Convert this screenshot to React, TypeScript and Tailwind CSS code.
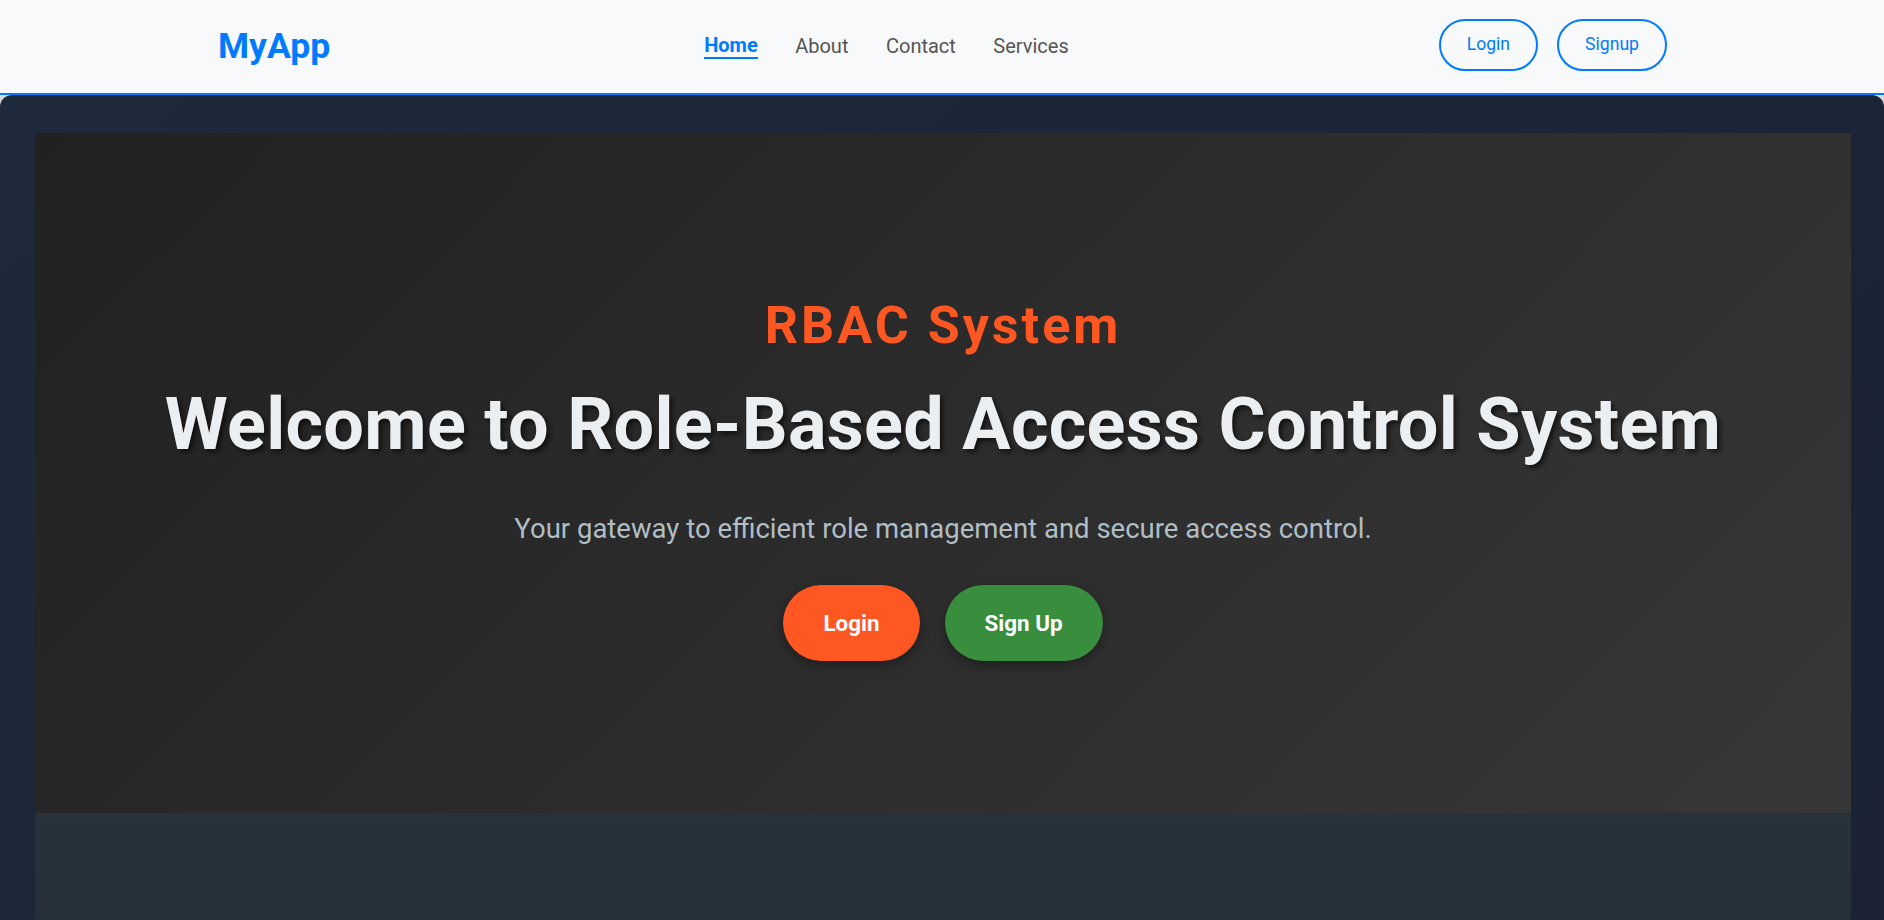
import React from "react";

export default function App() {
  return (
    <div className="min-h-screen bg-[#d9d9d9] font-['Roboto',_'Liberation_Sans',_sans-serif]">
      <nav className="h-[95px] bg-[#f8f9fa] border-b-2 border-[#007bff] flex items-center justify-between pl-[218px] pr-[217px]">
        <div className="text-[35.5px] leading-none font-bold text-[#007bff]">MyApp</div>
        <ul className="flex items-center gap-[37.5px] text-[20px] leading-[23px] ml-[4px]">
          <li className="font-bold text-[#007bff] border-b-2 border-[#007bff]">Home</li>
          <li className="text-[#555555]">About</li>
          <li className="text-[#555555]">Contact</li>
          <li className="text-[#555555]">Services</li>
        </ul>
        <div className="flex items-center gap-[19px] -mt-[3px]">
          <button className="h-[52px] px-[26px] rounded-full border-2 border-[#007bff] text-[#007bff] text-[17.6px] leading-none bg-transparent">
            Login
          </button>
          <button className="h-[52px] px-[26px] rounded-full border-2 border-[#007bff] text-[#007bff] text-[17.6px] leading-none bg-transparent">
            Signup
          </button>
        </div>
      </nav>

      <main className="rounded-t-[12px] bg-[linear-gradient(135deg,#1e293b,#1a2234)] pt-[38px] pl-[35px] pr-[33px]">
        <section className="h-[680px] bg-[linear-gradient(135deg,#212121,#373737)] flex flex-col items-center pt-[163px] text-center">
          <h2 className="text-[52px] leading-[60px] font-bold tracking-[3px] text-[#ff5722]">
            RBAC System
          </h2>
          <h1 className="mt-[26px] text-[72px] leading-[86px] font-bold tracking-[0.3px] text-[#eceff1] [text-shadow:3px_3px_5px_rgba(0,0,0,0.6)]">
            Welcome to Role-Based Access Control System
          </h1>
          <p className="mt-[41px] text-[27.5px] leading-[40px] text-[#b0bec5]">
            Your gateway to efficient role management and secure access control.
          </p>
          <div className="mt-[36px] flex items-center gap-[25px]">
            <button className="h-[76px] px-[40px] rounded-full bg-[#ff5722] text-white text-[22.4px] font-bold leading-none shadow-[0_4px_12px_rgba(0,0,0,0.35)]">
              Login
            </button>
            <button className="h-[76px] px-[40px] rounded-full bg-[#388e3c] text-white text-[22.4px] font-bold leading-none shadow-[0_4px_12px_rgba(0,0,0,0.35)]">
              Sign Up
            </button>
          </div>
        </section>
        <section className="h-[320px] bg-[linear-gradient(180deg,#27323a,#232a33)]"></section>
      </main>
    </div>
  );
}
